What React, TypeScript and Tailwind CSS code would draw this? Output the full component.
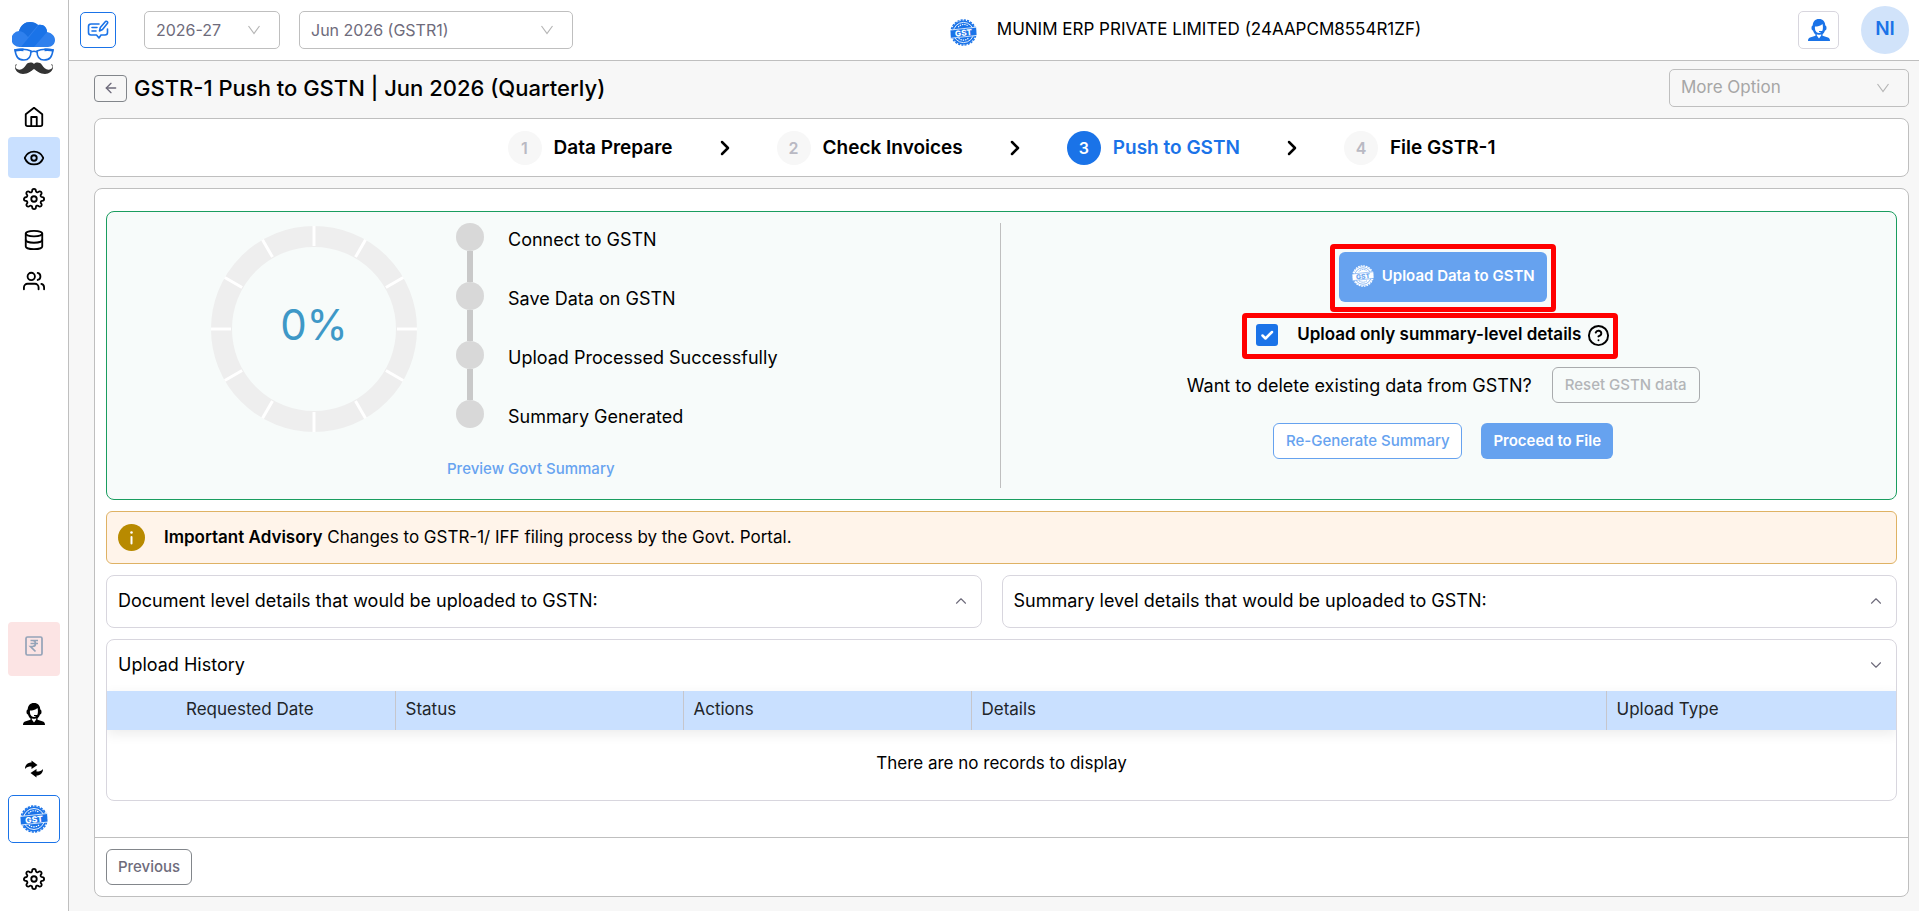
import { ArrowLeft, ChevronDown, ChevronRight, ChevronUp, CircleHelp, Database, Eye } from "lucide-react";
import { FiHome, FiSettings, FiUsers } from "react-icons/fi";

const steps = ["Data Prepare", "Check Invoices", "Push to GSTN", "File GSTR-1"];

const progress = ["Connect to GSTN", "Save Data on GSTN", "Upload Processed Successfully", "Summary Generated"];

const columns = [
  { label: "Requested Date", className: "w-[288px] pl-[79px]" },
  { label: "Status", className: "w-[288px] pl-2.5" },
  { label: "Actions", className: "w-[288px] pl-2.5" },
  { label: "Details", className: "pl-2.5" },
  { label: "Upload Type", className: "w-[290px] pl-2.5" },
];

function Logo() {
  return (
    <svg width="44" height="54" viewBox="0 0 44 54" aria-hidden="true">
      <path d="M8 25a8 8 0 0 1-1-16C9 3 13 0 18 0c3 0 6 1 8 3 5-1 9 3 9 7 5 1 8 4 8 8 0 4-3 7-7 7Z" fill="#2f80ed" />
      <path d="M7 9C9 3 13 0 18 0c3 0 6 1 8 3L16 15C13 11 10 9 7 9Z" fill="#1a6fe0" />
      <path d="M9 25 27 3c5-1 8 3 8 7L22 25Z" fill="#1a73e8" />
      <g fill="none" stroke="#1a6fe0" strokeWidth="1.600">
        <path d="M3 28c6-1 12-1 16 1 0 6-2 9-7 9-6 0-8-3-9-10ZM41 28c-6-1-12-1-16 1 0 6 2 9 7 9 6 0 8-3 9-10ZM19 30c2-1 4-1 6 0" />
        <path d="M2.500 28.500c3-.8 6-.8 9-.6M41.500 28.500c-3-.8-6-.8-9-.6" strokeWidth="2.600" />
      </g>
      <path d="M22 42c2-2 6-2 8 1 2 3 5 6 9 4 2-1 2-4 0-4 1-2 2 0 2 2 0 4-4 7-8 7-5 0-8-3-11-5-3 2-6 5-11 5-4 0-8-3-8-7 0-2 1-4 2-2-2 0-2 3 0 4 4 2 7-1 9-4 2-3 6-3 8-1Z" fill="#333" />
    </svg>
  );
}

function GstBadge({ size, color, ink }: { size: number; color: string; ink: string }) {
  return (
    <svg width={size} height={size} viewBox="0 0 28 28" aria-hidden="true" className="shrink-0">
      <circle cx="14" cy="14" r="12.500" fill={color} />
      <circle cx="14" cy="14" r="13" fill="none" stroke={color} strokeWidth="1.500" strokeDasharray="2.200 1.200" />
      <circle cx="14" cy="14" r="10.500" fill="none" stroke={ink} strokeWidth="0.900" />
      <path d="M8.500 8.500a7.500 7.500 0 0 1 10-1.500M9 20a7.500 7.500 0 0 0 10.500-.5" fill="none" stroke={ink} strokeWidth="1.200" strokeDasharray="1.400 0.900" />
      <path d="M0 11.500 27.500 8.500 28 17 .5 20Z" fill={color} stroke={ink} strokeWidth="0.800" />
      <text x="14" y="17.500" textAnchor="middle" fontSize="8.500" fontWeight="800" fill={ink} fontFamily="Inter, sans-serif" transform="rotate(-6 14 14)">
        GST
      </text>
    </svg>
  );
}

function AgentIcon({ className }: { className: string }) {
  return (
    <svg width="22" height="22" viewBox="0 0 22 22" fill="currentColor" className={className} aria-hidden="true">
      <path fillRule="evenodd" d="M11 0c4 0 6 2.500 6.300 6.500.8.300 1.200 1 1.200 2.500s-.5 2.500-1.500 2.600c-.4 1.500-1.400 3-2.500 3.900v1.300l5.500 1.700c1.300.5 2 1.500 2 3.500H0c0-2 .7-3 2-3.500l5.500-1.700v-1.300C6.300 14.600 5.500 13.200 5 11.600 4 11.500 3.500 10.500 3.500 9s.4-2.200 1.200-2.500C5 2.500 7 0 11 0Zm3.500 5c-2 2-5 2.500-7.500 2.500-.5 3 1 6.500 4 6.500.8 0 1.500-.3 2.200-.8l-2.200-.2v-1h3.200c.8-1.500 1-4.500.3-7ZM8.800 16.500 11 19.500l2.200-3v-1.200c-1.300.7-3 .7-4.400 0Z" />
    </svg>
  );
}

function SwapIcon() {
  return (
    <svg width="20" height="18" viewBox="0 0 20 18" aria-hidden="true">
      <path d="M1 9C1 5 3.500 2.500 7.500 2.500V.5L13.500 5 7.500 9V6.500C4.500 6.500 2.500 7 1 9ZM19 9c0 4-2.500 6.500-6.500 6.500v2L6.500 13l6-4v2.500c3 0 5-.5 6.500-2.500Z" fill="#000" />
    </svg>
  );
}

function RupeeIcon() {
  return (
    <svg width="18" height="20" viewBox="0 0 18 20" fill="none" stroke="#94a3b8" strokeWidth="1.700" aria-hidden="true">
      <rect x="1" y="1" width="16" height="18" rx="1.500" />
      <path d="M5.500 4.500h7.500M5.500 7.500h7.500M5.500 4.500h2c4 0 4 6 0 6h-2l5 5" />
    </svg>
  );
}

function NoteIcon() {
  return (
    <svg width="22" height="20" viewBox="0 0 22 20" fill="none" stroke="#1a73e8" strokeWidth="1.600" strokeLinecap="round" strokeLinejoin="round" aria-hidden="true">
      <path d="M12 4H4a2.500 2.500 0 0 0-2.500 2.500v6A2.500 2.500 0 0 0 4 15h5.500l2.500 3 2-3h4a2.500 2.500 0 0 0 2.500-2.500V9M5 7.500h5M5 11h4" />
      <path d="m12.500 11 .8-3.500L18.500 1.500c1.200-.8 2.700.3 2 1.700L15.500 9.500Z" />
    </svg>
  );
}

function ThinChevron({ className }: { className: string }) {
  return (
    <svg width="14" height="10" viewBox="0 0 14 10" fill="none" stroke="currentColor" strokeWidth="1.200" className={className} aria-hidden="true">
      <path d="m1.500 1 5.500 7.500L12.500 1" />
    </svg>
  );
}

function Dropdown({ label, value, className, disabled }: { label: string; value: string; className: string; disabled?: boolean }) {
  return (
    <div className={`relative h-[38px] ${className}`}>
      <select
        aria-label={label}
        disabled={disabled}
        className="h-full w-full appearance-none rounded-[5px] border border-[#bfbfbf] bg-transparent pr-9 pb-px pl-[11px]"
      >
        <option>{value}</option>
      </select>
      <ThinChevron className="pointer-events-none absolute top-3.5 right-[19px] text-[#b5b5b5]" />
    </div>
  );
}

function Sidebar() {
  const item = "flex h-[41px] w-[52px] items-center justify-center rounded";
  return (
    <aside className="flex w-[69px] shrink-0 flex-col items-center border-r border-[#bfbfbf] bg-white pt-[22px]">
      <Logo />
      <nav className="mt-5 flex flex-col items-center">
        <a href="#home" aria-label="Home" className={item}><FiHome size={22} /></a>
        <a href="#view" aria-label="View" className={`${item} bg-[#c9e0ff]`}><Eye size={22} /></a>
        <a href="#settings" aria-label="Settings" className={item}><FiSettings size={22} /></a>
        <a href="#data" aria-label="Data" className={item}><Database size={22} /></a>
        <a href="#users" aria-label="Users" className={item}><FiUsers size={22} /></a>
      </nav>
      <div className="mt-auto flex flex-col items-center">
        <button aria-label="Billing" className="flex h-[54px] w-[52px] items-center justify-center rounded bg-[#fce4e4] pb-1.5"><RupeeIcon /></button>
        <button aria-label="Support" className="flex h-[76px] w-[52px] items-center justify-center"><AgentIcon className="text-black" /></button>
        <button aria-label="Switch" className="mb-[9px] flex h-[34px] w-[52px] items-center justify-center"><SwapIcon /></button>
        <button aria-label="GST" className="flex h-12 w-[52px] items-center justify-center rounded-[5px] border border-[#1a73e8]">
          <GstBadge size={28} color="#1a73e8" ink="#fff" />
        </button>
        <button aria-label="Preferences" className="mt-[18px] mb-3.5 flex h-9 w-[52px] items-center justify-center"><FiSettings size={22} /></button>
      </div>
    </aside>
  );
}

function Header() {
  return (
    <header className="flex h-[61px] items-center border-b border-[#bfbfbf] bg-white pr-2.5 pl-[11px]">
      <div className="flex items-center text-[16px] text-[#6e6b7b]">
        <button aria-label="Notes" className="flex size-9 items-center justify-center rounded-[5px] border border-[#1a73e8]"><NoteIcon /></button>
        <Dropdown label="Financial year" value="2026-27" className="ml-7 w-[136px]" />
        <Dropdown label="Return period" value="Jun 2026 (GSTR1)" className="ml-[19px] w-[274px]" />
      </div>
      <div className="flex flex-1 items-center justify-center gap-5 pt-1 text-[17px]">
        <GstBadge size={27} color="#1a73e8" ink="#fff" />
        <span className="pb-1">MUNIM ERP PRIVATE LIMITED (24AAPCM8554R1ZF)</span>
      </div>
      <div className="flex items-center gap-[22px]">
        <button aria-label="Contact support" className="flex h-[38px] w-[41px] items-center justify-center rounded-[5px] border border-[#d8d6de]">
          <AgentIcon className="text-[#1a73e8]" />
        </button>
        <button className="size-12 rounded-full bg-[#d1e3fa] pb-0.5 text-[19px] font-semibold text-[#1a73e8]">NI</button>
      </div>
    </header>
  );
}

function Stepper() {
  return (
    <ol className="mt-[11px] flex h-[59px] items-center justify-center rounded-lg border border-[#bfbfbf] bg-white">
      {steps.map((step, i) => {
        const active = i === 2;
        return (
          <li key={step} className="flex items-center">
            {i > 0 && <ChevronRight size={24} strokeWidth={2.5} className="mx-10" />}
            <span className={`flex size-[34px] items-center justify-center rounded-full text-[16px] font-semibold ${active ? "bg-[#1a73e8] text-white" : "bg-[#f7f7f7] text-[#b9b9c3]"}`}>
              {i + 1}
            </span>
            <span className={`ml-3 text-[19px] leading-[34px] font-semibold ${active ? "text-[#1a73e8]" : "text-black"}`}>{step}</span>
          </li>
        );
      })}
    </ol>
  );
}

function ProgressRing() {
  return (
    <svg width="208" height="208" viewBox="0 0 208 208" role="img" aria-label="0% uploaded" className="mt-0.5 shrink-0">
      <circle cx="104" cy="104" r="92.500" fill="none" stroke="#eee" strokeWidth="21" />
      {Array.from({ length: 12 }, (_, i) => (
        <path key={i} d="M104 1v20" stroke="#fff" strokeWidth="3" transform={`rotate(${i * 30} 104 104)`} />
      ))}
      <text x="104" y="115" textAnchor="middle" fontSize="42" fill="#3e98c7" fontFamily="Inter, sans-serif">0%</text>
    </svg>
  );
}

function UploadPanel() {
  return (
    <section className="grid grid-cols-2 rounded-lg border border-[#1a9d5f] bg-[#f7fbfa] py-[11px]">
      <div className="mr-px flex min-h-[265px] border-r border-[#bfbfbf] pl-[103px]">
        <ProgressRing />
        <div className="ml-[29px]">
          <ul className="pl-[9px]">
            {progress.map((label, i) => (
              <li key={label} className="flex text-[18px]">
                <div className="flex flex-col items-center">
                  <span className="size-7 rounded-full bg-[#d8d8d8]" />
                  {i < 3 && <span className="h-[31px] w-1.5 bg-[#c9c9c9]" />}
                </div>
                <span className="ml-6 pt-[5px] leading-6">{label}</span>
              </li>
            ))}
          </ul>
          <a href="#preview" className="mt-[30px] block text-[15px] leading-5 font-medium text-[#67a3f0]">Preview Govt Summary</a>
        </div>
      </div>
      <div className="flex flex-col items-center pt-[21px] pr-[11px]">
        <div className="rounded-sm border-[5px] border-[#f00] px-1 pt-[3px] pb-[5px]">
          <button className="flex h-[50px] w-[208px] items-center justify-center gap-2 rounded-md bg-[#66a2ef] pb-0.5 text-[15px] font-semibold text-white">
            <GstBadge size={22} color="#fff" ink="#66a2ef" />
            Upload Data to GSTN
          </button>
        </div>
        <div className="mt-px mr-[26px] flex h-[46px] w-[376px] items-center rounded-sm border-[5px] border-[#f00] pb-0.5 pl-[9px]">
          <div className="relative size-[22px]">
            <input id="summary-only" type="checkbox" defaultChecked className="block size-[22px] appearance-none rounded-[3px] bg-[#1a73e8]" />
            <svg width="22" height="22" viewBox="0 0 22 22" fill="none" stroke="#fff" strokeWidth="2.500" strokeLinecap="round" strokeLinejoin="round" className="pointer-events-none absolute inset-0" aria-hidden="true">
              <path d="m6.500 11.500 3 3 6.500-6.500" />
            </svg>
          </div>
          <label htmlFor="summary-only" className="ml-[19px] text-[17px] font-semibold whitespace-nowrap">Upload only summary-level details</label>
          <CircleHelp size={23} className="ml-1.5 shrink-0" />
        </div>
        <div className="mt-2 flex items-center gap-5 text-[18px]">
          Want to delete existing data from GSTN?
          <button disabled className="h-9 w-[148px] rounded-md border border-[#a9abad] text-[15px] font-medium text-[#b3b5b8]">Reset GSTN data</button>
        </div>
        <div className="mt-5 flex gap-[19px] text-[15px]">
          <button className="h-9 w-[189px] rounded-md border border-[#66a2ef] bg-white font-medium text-[#66a2ef]">Re-Generate Summary</button>
          <button className="h-9 w-[132px] rounded-md bg-[#66a2ef] font-semibold text-white">Proceed to File</button>
        </div>
      </div>
    </section>
  );
}

export default function App() {
  return (
    <div className="flex min-h-screen bg-[#f7f7f7] font-[Inter,sans-serif] text-black">
      <Sidebar />
      <div className="flex min-w-0 flex-1 flex-col">
        <Header />
        <main className="flex flex-1 flex-col pt-2 pr-2.5 pb-3.5 pl-[25px]">
          <div className="flex h-[38px] items-center">
            <button aria-label="Back" className="flex h-[27px] w-[33px] items-center justify-center rounded border border-[#82868b] text-[#6e6b7b]">
              <ArrowLeft size={16} />
            </button>
            <h1 className="ml-[7px] flex-1 text-[22px] font-medium">GSTR-1 Push to GSTN | Jun 2026 (Quarterly)</h1>
            <Dropdown label="More options" value="More Option" disabled className="w-[240px] text-[17px] text-[#a6a6a6]" />
          </div>

          <Stepper />

          <div className="mt-[11px] flex flex-1 flex-col rounded-lg border border-[#bfbfbf] bg-white">
            <div className="flex flex-col gap-[11px] px-[11px] pt-[22px]">
              <UploadPanel />

              {/* Advisory */}
              <div className="flex h-[53px] items-center rounded-md border border-[#dfb264] bg-[#fff4ea] pl-[11px] text-[17px]">
                <svg width="27" height="27" viewBox="0 0 27 27" aria-hidden="true">
                  <circle cx="13.500" cy="13.500" r="13.500" fill="#b88a00" />
                  <circle cx="13.500" cy="8.500" r="1.300" fill="#fff" />
                  <path d="M13.500 13v6.500" stroke="#fff" strokeWidth="2" strokeLinecap="round" />
                </svg>
                <p className="ml-[19px]"><b className="font-semibold">Important Advisory</b> Changes to GSTR-1/ IFF filing process by the Govt. Portal.</p>
              </div>

              <div className="grid grid-cols-2 text-[18px]">
                <button className="mr-5 flex h-[53px] items-center justify-between rounded-lg border border-[#d8d6de] px-[11px] pb-0.5">
                  Document level details that would be uploaded to GSTN:
                  <ChevronUp size={18} strokeWidth={1.5} className="text-[#6e6b7b]" />
                </button>
                <button className="flex h-[53px] items-center justify-between rounded-lg border border-[#d8d6de] px-[11px] pb-0.5">
                  Summary level details that would be uploaded to GSTN:
                  <ChevronUp size={18} strokeWidth={1.5} className="text-[#6e6b7b]" />
                </button>
              </div>

              {/* History */}
              <section className="overflow-hidden rounded-lg border border-[#d8d6de]">
                <button className="flex h-[51px] w-full items-center justify-between px-[11px] pb-0.5 text-[18px]">
                  Upload History
                  <ChevronDown size={18} strokeWidth={1.5} className="text-[#6e6b7b]" />
                </button>
                <table className="w-full table-fixed border-collapse text-left text-[17px]">
                  <thead className="bg-[#c9e0ff] text-[#212529] shadow-[0_4px_12px_rgba(0,0,0,0.08)]">
                    <tr className="h-[39px]">
                      {columns.map((col, i) => (
                        <th key={col.label} className={`pb-0.5 font-normal ${col.className} ${i > 0 ? "border-l border-[#c6c6cc]" : ""}`}>{col.label}</th>
                      ))}
                    </tr>
                  </thead>
                  <tbody>
                    <tr>
                      <td colSpan={5} className="h-[70px] pb-0.5 text-center">There are no records to display</td>
                    </tr>
                  </tbody>
                </table>
              </section>
            </div>

            <footer className="mt-auto border-t border-[#bfbfbf] px-[11px] py-[11px]">
              <button className="h-9 w-[86px] rounded-md border border-[#82868b] text-[15px] font-medium text-[#6e6b7b]">Previous</button>
            </footer>
          </div>
        </main>
      </div>
    </div>
  );
}
